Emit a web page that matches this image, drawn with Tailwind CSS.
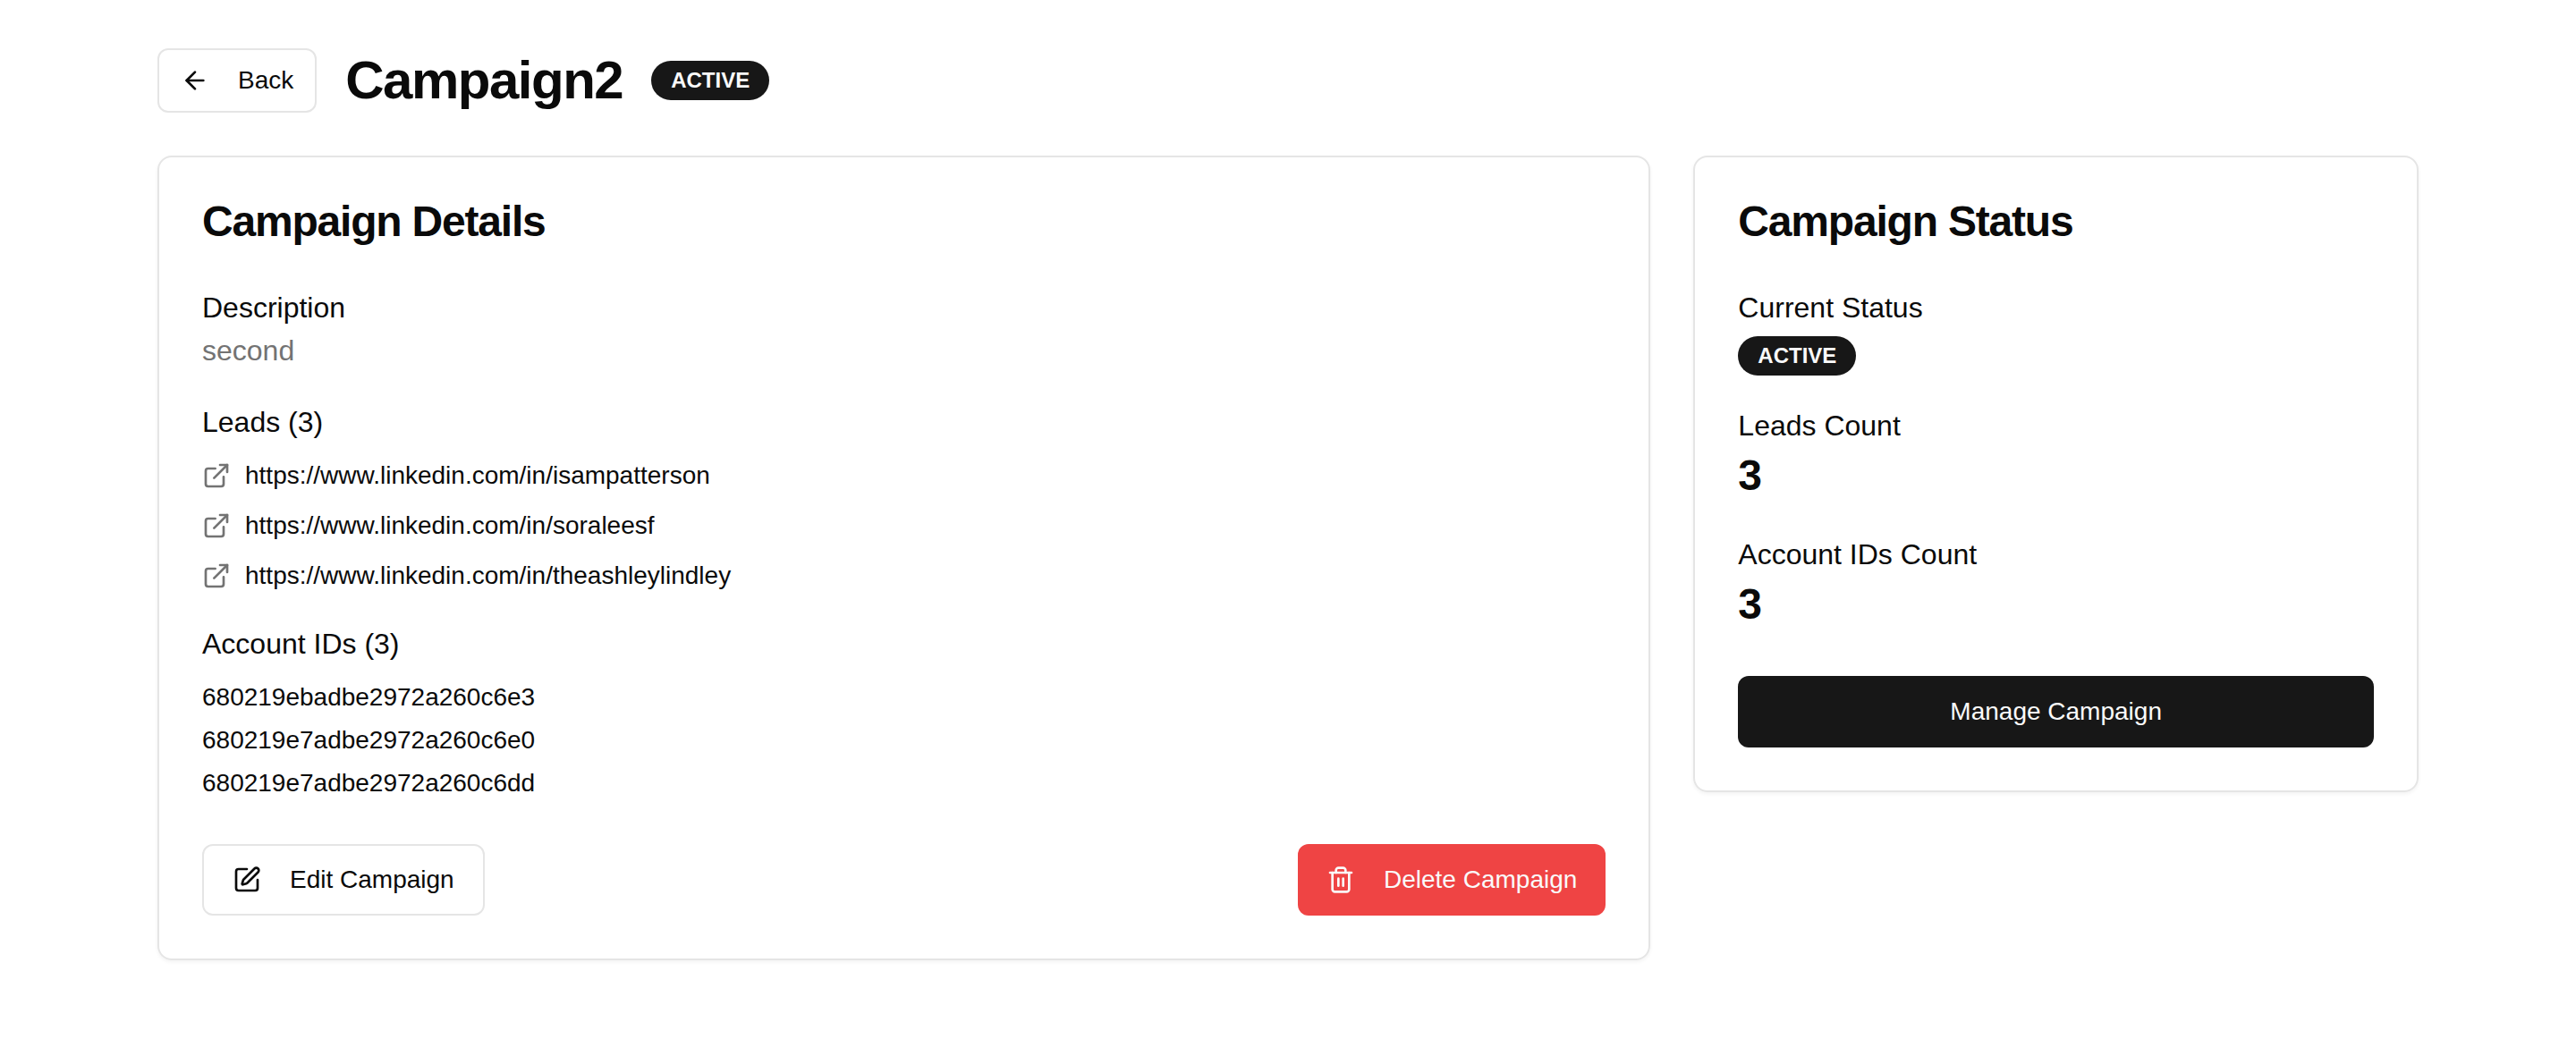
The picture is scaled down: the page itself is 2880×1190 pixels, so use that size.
<!DOCTYPE html>
<html lang="en">
<head>
<meta charset="utf-8">
<meta name="viewport" content="width=device-width, initial-scale=1">
<title>Campaign2</title>
<script src="https://cdn.jsdelivr.net/npm/@tailwindcss/browser@4"></script>
</head>
<body class="bg-white text-neutral-950 text-[32px] leading-[48px] font-['Liberation_Sans',Arial,sans-serif]">
<svg class="hidden" aria-hidden="true">
  <symbol id="external-link" viewBox="0 0 24 24" fill="none" stroke="currentColor" stroke-width="2" stroke-linecap="round" stroke-linejoin="round">
    <path d="M15 3h6v6"/><path d="M10 14 21 3"/><path d="M18 13v6a2 2 0 0 1-2 2H5a2 2 0 0 1-2-2V8a2 2 0 0 1 2-2h6"/>
  </symbol>
</svg>
<div class="mx-auto max-w-[2560px] px-4 pt-[54px] pb-12">
  <header class="mb-12 flex items-center gap-8">
    <button type="button" class="flex h-[72px] items-center gap-8 rounded-xl border-2 border-neutral-200 px-6 text-[28px] leading-10 font-medium">
      <svg class="size-8" viewBox="0 0 24 24" fill="none" stroke="currentColor" stroke-width="2" stroke-linecap="round" stroke-linejoin="round" aria-hidden="true"><path d="m12 19-7-7 7-7"/><path d="M19 12H5"/></svg>
      Back
    </button>
    <h1 class="text-6xl leading-[72px] font-bold tracking-tight">Campaign2</h1>
    <span class="rounded-full bg-neutral-900 px-[22px] py-1.5 text-2xl leading-8 font-semibold text-neutral-50">ACTIVE</span>
  </header>

  <main class="grid grid-cols-1 items-start gap-12 lg:grid-cols-3">
    <section class="rounded-2xl border-2 border-neutral-200 p-12 shadow-[0_2px_4px_rgba(0,0,0,0.05)] lg:col-span-2">
      <h2 class="mb-12 text-5xl leading-none font-semibold tracking-tight">Campaign Details</h2>
      <div class="flex flex-col gap-8">
        <div>
          <h3 class="font-medium">Description</h3>
          <p class="text-neutral-500">second</p>
        </div>
        <div>
          <h3 class="font-medium">Leads (3)</h3>
          <ul class="mt-4 flex flex-col items-start gap-4 text-[28px] leading-10">
            <li><a href="https://www.linkedin.com/in/isampatterson" class="flex items-center gap-4"><svg class="size-8 shrink-0 text-neutral-500" aria-hidden="true"><use href="#external-link"/></svg>https://www.linkedin.com/in/isampatterson</a></li>
            <li><a href="https://www.linkedin.com/in/soraleesf" class="flex items-center gap-4"><svg class="size-8 shrink-0 text-neutral-500" aria-hidden="true"><use href="#external-link"/></svg>https://www.linkedin.com/in/soraleesf</a></li>
            <li><a href="https://www.linkedin.com/in/theashleylindley" class="flex items-center gap-4"><svg class="size-8 shrink-0 text-neutral-500" aria-hidden="true"><use href="#external-link"/></svg>https://www.linkedin.com/in/theashleylindley</a></li>
          </ul>
        </div>
        <div>
          <h3 class="font-medium">Account IDs (3)</h3>
          <ul class="mt-4 flex flex-col gap-2 text-[28px] leading-10">
            <li>680219ebadbe2972a260c6e3</li>
            <li>680219e7adbe2972a260c6e0</li>
            <li>680219e7adbe2972a260c6dd</li>
          </ul>
        </div>
      </div>
      <div class="mt-12 flex items-center justify-between">
        <button type="button" class="flex h-20 items-center gap-8 rounded-xl border-2 border-neutral-200 px-8 text-[28px] leading-10 font-medium">
          <svg class="size-8" viewBox="0 0 24 24" fill="none" stroke="currentColor" stroke-width="2" stroke-linecap="round" stroke-linejoin="round" aria-hidden="true"><path d="M12 3H5a2 2 0 0 0-2 2v14a2 2 0 0 0 2 2h14a2 2 0 0 0 2-2v-7"/><path d="M18.375 2.625a1 1 0 0 1 3 3l-9.013 9.014a2 2 0 0 1-.853.505l-2.873.84a.5.5 0 0 1-.62-.62l.84-2.873a2 2 0 0 1 .506-.852z"/></svg>
          Edit Campaign
        </button>
        <button type="button" class="flex h-20 items-center gap-8 rounded-xl bg-[#ef4444] px-8 text-[28px] leading-10 font-medium text-neutral-50">
          <svg class="size-8" viewBox="0 0 24 24" fill="none" stroke="currentColor" stroke-width="2" stroke-linecap="round" stroke-linejoin="round" aria-hidden="true"><path d="M3 6h18"/><path d="M19 6v14c0 1-1 2-2 2H7c-1 0-2-1-2-2V6"/><path d="M8 6V4c0-1 1-2 2-2h4c1 0 2 1 2 2v2"/><path d="M10 11v6"/><path d="M14 11v6"/></svg>
          Delete Campaign
        </button>
      </div>
    </section>

    <section class="rounded-2xl border-2 border-neutral-200 p-12 shadow-[0_2px_4px_rgba(0,0,0,0.05)]">
      <h2 class="mb-12 text-5xl leading-none font-semibold tracking-tight">Campaign Status</h2>
      <div class="flex flex-col gap-8">
        <div class="flex flex-col items-start gap-2">
          <h3 class="font-medium">Current Status</h3>
          <span class="rounded-full bg-neutral-900 px-[22px] py-1.5 text-2xl leading-8 font-semibold text-neutral-50">ACTIVE</span>
        </div>
        <div>
          <h3 class="font-medium">Leads Count</h3>
          <p class="text-5xl leading-16 font-bold">3</p>
        </div>
        <div>
          <h3 class="font-medium">Account IDs Count</h3>
          <p class="text-5xl leading-16 font-bold">3</p>
        </div>
      </div>
      <button type="button" class="mt-12 h-20 w-full rounded-xl bg-neutral-900 px-8 text-[28px] leading-10 font-medium text-neutral-50">Manage Campaign</button>
    </section>
  </main>
</div>
</body>
</html>
